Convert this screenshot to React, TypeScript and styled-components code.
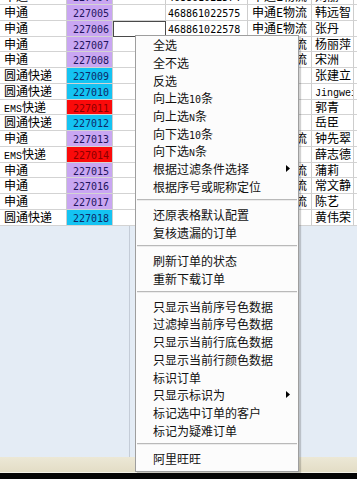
import React from "react";
import styled, { createGlobalStyle } from "styled-components";

type Tone = "purple" | "cyan" | "red";

interface OrderRow {
  carrier: string;
  no: string;
  tone: Tone;
  track: string;
  service: string;
  name: string;
  focus?: boolean;
}

const toneBg: Record<Tone, string> = {
  purple: "#c9a6f2",
  cyan: "#14c3f2",
  red: "#fb0a0a",
};

const toneFg: Record<Tone, string> = {
  purple: "#22145e",
  cyan: "#0d2a68",
  red: "#8a0000",
};

const rows: OrderRow[] = [
  { carrier: "申通", no: "227004", tone: "purple", track: "468861022574", service: "申通E物流", name: "刘丽" },
  { carrier: "申通", no: "227005", tone: "purple", track: "468861022575", service: "申通E物流", name: "韩远智" },
  { carrier: "申通", no: "227006", tone: "purple", track: "468861022578", service: "申通E物流", name: "张丹", focus: true },
  { carrier: "申通", no: "227007", tone: "purple", track: "468861022580", service: "申通E物流", name: "杨丽萍" },
  { carrier: "申通", no: "227008", tone: "purple", track: "468861022581", service: "申通E物流", name: "宋洲" },
  { carrier: "圆通快递", no: "227009", tone: "cyan", track: "V100235671", service: "圆通", name: "张建立" },
  { carrier: "圆通快递", no: "227010", tone: "cyan", track: "V100235672", service: "圆通", name: "Jingwei" },
  { carrier: "EMS快递", no: "227011", tone: "red", track: "EA52100113", service: "EMS", name: "郭青" },
  { carrier: "圆通快递", no: "227012", tone: "cyan", track: "V100235673", service: "圆通", name: "岳臣" },
  { carrier: "申通", no: "227013", tone: "purple", track: "468861022583", service: "申通E物流", name: "钟先翠" },
  { carrier: "EMS快递", no: "227014", tone: "red", track: "EA52100114", service: "EMS", name: "薛志德" },
  { carrier: "申通", no: "227015", tone: "purple", track: "468861022585", service: "申通E物流", name: "蒲莉" },
  { carrier: "申通", no: "227016", tone: "purple", track: "468861022586", service: "申通E物流", name: "常文静" },
  { carrier: "申通", no: "227017", tone: "purple", track: "468861022587", service: "申通E物流", name: "陈艺" },
  { carrier: "圆通快递", no: "227018", tone: "cyan", track: "V100235675", service: "圆通", name: "黄伟荣" },
];

const GlobalStyle = createGlobalStyle`
  html, body {
    margin: 0;
    padding: 0;
    background: #000;
  }
  body {
    width: 357px;
    height: 479px;
    overflow: hidden;
    font-family: "Noto Sans CJK SC", "Liberation Sans", sans-serif;
  }
`;

const Screen = styled.div`
  position: relative;
  width: 357px;
  height: 479px;
  overflow: hidden;
  display: flex;
  flex-direction: column;
  background: #e4ecf5;
`;

const GridArea = styled.div`
  height: 226px;
  flex-shrink: 0;
  overflow: hidden;
`;

const Rows = styled.div`
  margin-top: -10.7px;
`;

const Row = styled.div`
  display: grid;
  grid-template-columns: 67px 46px 53px 82px 64px 42px 1fr;
  height: 15.75px;
`;

const Cell = styled.div<{ $tone?: Tone; $right?: boolean; $focus?: boolean; $pad?: number }>`
  box-sizing: border-box;
  border-right: 1px solid #cdcdcd;
  border-bottom: 1px solid #d3d3d3;
  background: ${(p) => (p.$tone ? toneBg[p.$tone] : "#fff")};
  color: ${(p) => (p.$tone ? toneFg[p.$tone] : "#000")};
  font-size: 12px;
  line-height: 14.75px;
  padding: ${(p) => (p.$right ? "0 3px 0 0" : `0 0 0 ${p.$pad ?? 4}px`)};
  text-align: ${(p) => (p.$right ? "right" : "left")};
  white-space: nowrap;
  overflow: hidden;
  outline: ${(p) => (p.$focus ? "1px solid #4a4a4a" : "none")};
  outline-offset: -1px;
`;

const Num = styled.span`
  font-family: "DejaVu Sans Mono", monospace;
  font-size: 10px;
`;

const Latin = styled.span`
  font-family: "Liberation Mono", monospace;
  font-size: 10px;
`;

const LowerArea = styled.div`
  flex: 1;
  display: flex;
`;

const SidePane = styled.div`
  width: 129px;
  border-right: 1px solid #c4ccd7;
`;

const StatusBar = styled.div`
  height: 15px;
  flex-shrink: 0;
  background: linear-gradient(#ece8d6, #e3ddc6);
  border-bottom: 1px solid #f4f2e8;
`;

const BottomEdge = styled.div`
  height: 6px;
  flex-shrink: 0;
  background: #050505;
`;

const Menu = styled.div`
  position: absolute;
  left: 135px;
  top: 35px;
  width: 164px;
  box-sizing: border-box;
  padding: 0 0 4px;
  background: #fcfcfc;
  border: 1px solid #9e9e9e;
  box-shadow: 2px 2px 1px rgba(0, 0, 0, 0.18);
`;

const Item = styled.div`
  display: flex;
  align-items: center;
  justify-content: space-between;
  height: 17.7px;
  padding: 0 8px 0 17px;
  font-size: 12px;
  color: #111;
  white-space: nowrap;
`;

const Separator = styled.div`
  height: 10.5px;
  display: flex;
  align-items: center;
  padding: 0 1px;
  &::after {
    content: "";
    flex: 1;
    border-top: 1px solid #b9b9b9;
    border-bottom: 1px solid #ececec;
  }
`;

const Arrow = () => (
  <svg width="4" height="7" viewBox="0 0 4 7">
    <polygon points="0,0 4,3.5 0,7" fill="#000" />
  </svg>
);

// null = separator
const menu: ({ label: React.ReactNode; sub?: boolean } | null)[] = [
  { label: "全选" },
  { label: "全不选" },
  { label: "反选" },
  { label: <>向上选<Num>10</Num>条</> },
  { label: <>向上选<Latin>N</Latin>条</> },
  { label: <>向下选<Num>10</Num>条</> },
  { label: <>向下选<Latin>N</Latin>条</> },
  { label: "根据过滤条件选择", sub: true },
  { label: "根据序号或昵称定位" },
  null,
  { label: "还原表格默认配置" },
  { label: "复核遗漏的订单" },
  null,
  { label: "刷新订单的状态" },
  { label: "重新下载订单" },
  null,
  { label: "只显示当前序号色数据" },
  { label: "过滤掉当前序号色数据" },
  { label: "只显示当前行底色数据" },
  { label: "只显示当前行颜色数据" },
  { label: "标识订单" },
  { label: "只显示标识为", sub: true },
  { label: "标记选中订单的客户" },
  { label: "标记为疑难订单" },
  null,
  { label: "阿里旺旺" },
];

const carrierLabel = (c: string) =>
  c.startsWith("EMS") ? (
    <>
      <Latin>EMS</Latin>
      {c.slice(3)}
    </>
  ) : (
    c
  );

export default function App() {
  return (
    <>
      <GlobalStyle />
      <Screen>
        <GridArea>
          <Rows>
            {rows.map((r) => (
              <Row key={r.no}>
                <Cell>{carrierLabel(r.carrier)}</Cell>
                <Cell $tone={r.tone} $right>
                  <Num>{r.no}</Num>
                </Cell>
                <Cell $focus={r.focus} />
                <Cell $pad={2}>
                  <Num>{r.track}</Num>
                </Cell>
                <Cell>{r.service === "EMS" ? <Latin>EMS</Latin> : r.service}</Cell>
                <Cell $pad={3}>
                  {/^[A-Za-z]/.test(r.name) ? <Latin>{r.name}</Latin> : r.name}
                </Cell>
                <Cell />
              </Row>
            ))}
          </Rows>
        </GridArea>
        <LowerArea>
          <SidePane />
        </LowerArea>
        <StatusBar />
        <BottomEdge />

        <Menu>
          {menu.map((m, i) =>
            m ? (
              <Item key={i}>
                <span>{m.label}</span>
                {m.sub && <Arrow />}
              </Item>
            ) : (
              <Separator key={i} />
            )
          )}
        </Menu>
      </Screen>
    </>
  );
}
